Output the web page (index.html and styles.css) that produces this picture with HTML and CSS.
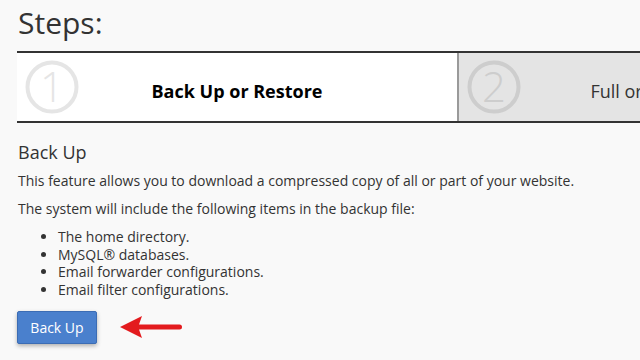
FILE: index.html
```html
<!DOCTYPE html>
<html>
<head>
<meta charset="utf-8">
<link rel="stylesheet" href="styles.css">
</head>
<body>
<div class="page">
  <h1 class="title">Steps:</h1>
  <div class="steps">
    <div class="step step-active">
      <svg class="step-num" width="54" height="54" viewBox="0 0 54 54"><circle cx="27" cy="27" r="24.5" fill="none" stroke="currentColor" stroke-width="4"/><text x="27" y="42" text-anchor="middle" class="num-text">1</text></svg>
      <div class="step-label">Back Up or Restore</div>
      <div></div>
    </div>
    <div class="step step-next">
      <svg class="step-num" width="54" height="54" viewBox="0 0 54 54"><circle cx="27" cy="27" r="24.5" fill="none" stroke="currentColor" stroke-width="4"/><text x="27" y="42" text-anchor="middle" class="num-text">2</text></svg>
      <div class="step-label">Full or Partial Backup</div>
      <div></div>
    </div>
  </div>
  <h3 class="section-title">Back Up</h3>
  <p class="text">This feature allows you to download a compressed copy of all or part of your website.</p>
  <p class="text">The system will include the following items in the backup file:</p>
  <ul class="items">
    <li>The home directory.</li>
    <li>MySQL® databases.</li>
    <li>Email forwarder configurations.</li>
    <li>Email filter configurations.</li>
  </ul>
  <div class="actions">
    <button class="btn">Back Up</button>
    <svg class="arrow" width="62" height="22" viewBox="0 0 62 22"><path d="M0 11 L22 0 L19 8.5 L59.5 8.5 A2.5 2.5 0 0 1 59.5 13.5 L19 13.5 L22 22 Z" fill="#e31b1e"/></svg>
  </div>
</div>
</body>
</html>
```

FILE: styles.css
```css
html, body {
  margin: 0;
  padding: 0;
  background: #f9f9f9;
  overflow: hidden;
}
body {
  font-family: "Open Sans", "DejaVu Sans", sans-serif;
  color: #333;
  width: 640px;
  height: 360px;
}
.page {
  padding: 0 0 0 17px;
}
.title {
  margin: 5px 0 10px 1px;
  font-size: 30px;
  line-height: 36px;
  font-weight: 400;
  color: #333;
}
.steps {
  display: flex;
  width: 900px;
  border-top: 2px solid #333;
  border-bottom: 2px solid #333;
}
.step {
  display: grid;
  grid-template-columns: 62px 1fr 62px;
  align-items: center;
  height: 68px;
  width: 440px;
  flex: none;
}
.step-num {
  margin-left: 8px;
  display: block;
}
.num-text {
  font-family: "Open Sans", sans-serif;
  font-size: 42px;
  font-weight: 300;
  fill: currentColor;
}
.step-active {
  background: #fff;
}
.step-active .step-num {
  color: #e5e5e5;
}
.step-next {
  background: #e4e4e4;
  border-left: 2px solid #9a9a9a;
}
.step-next .step-num {
  color: #cdcdcd;
}
.step-label {
  text-align: center;
  font-size: 18px;
  padding-top: 8px;
  white-space: nowrap;
}
.step-active .step-label {
  font-weight: 700;
  color: #000;
}
.step-next .step-label {
  color: #333;
}
.section-title {
  margin: 19px 0 9px 1px;
  font-size: 18px;
  line-height: 20px;
  font-weight: 400;
}
.text {
  margin: 0 0 8px 1px;
  font-size: 14px;
  line-height: 20px;
}
.items {
  margin: 9px 0 12px 1px;
  padding-left: 40px;
  font-size: 14px;
  line-height: 17.7px;
}
.actions {
  display: flex;
  align-items: center;
  gap: 23px;
}
.btn {
  width: 80px;
  height: 33px;
  padding: 0;
  font-family: "Open Sans", sans-serif;
  font-size: 14px;
  color: #fff;
  background: #4a80cd;
  border: 1px solid #3b6cb4;
  border-radius: 2px;
  box-shadow: 0 2px 4px rgba(0, 0, 0, 0.3);
}
.arrow {
  display: block;
}
```
